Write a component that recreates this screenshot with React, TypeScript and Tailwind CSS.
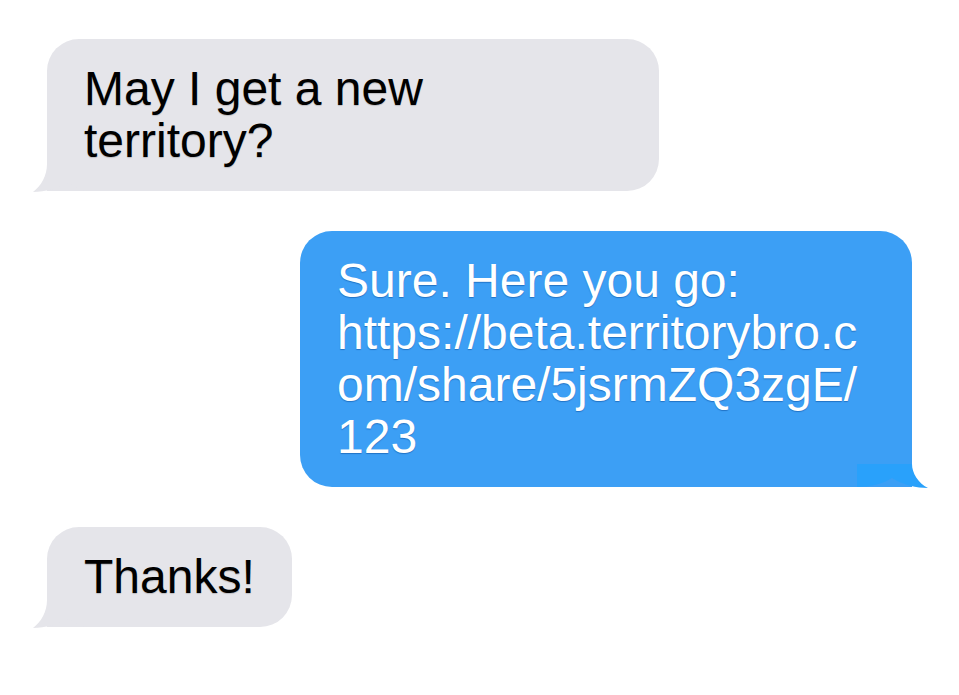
import React from 'react';

type Msg = { text: string; mine: boolean };

const messages: Msg[] = [
  { text: 'May I get a new territory?', mine: false },
  { text: 'Sure. Here you go: https://beta.territorybro.com/share/5jsrmZQ3zgE/123', mine: true },
  { text: 'Thanks!', mine: false },
];

const TailLeft = () => (
  <svg className="absolute -left-[14px] -bottom-[1px]" width="56" height="28" viewBox="0 0 56 28">
    <path d="M14 0 H56 V27 C50 27 43 24 35 19 C25 24 12 28 0 28 C8 22 14 12 14 0 Z" fill="#e5e5ea" />
  </svg>
);

const TailRight = () => (
  <svg className="absolute -right-[16px] -bottom-[1px]" width="71" height="24" viewBox="0 0 71 24">
    <path d="M0 0 H55 C55 9 61 19 71 24 C60 24 46 21 35 14 C26 20 12 23 0 23 Z" fill="#29a1fb" />
  </svg>
);

const Bubble: React.FC<{ msg: Msg }> = ({ msg }) => {
  if (msg.mine) {
    return (
      <div className="relative self-end max-w-[612px] rounded-[32px] rounded-br-none bg-[#3c9ff5] px-[37px] py-6 text-white [overflow-wrap:anywhere] [text-shadow:0_1px_1px_rgba(0,60,140,0.45)]">
        <TailRight />
        <span className="relative">{msg.text}</span>
      </div>
    );
  }
  return (
    <div className="relative self-start max-w-[612px] rounded-[32px] rounded-bl-none bg-[#e5e5ea] px-[37px] py-6 text-black [text-shadow:0_1px_1px_rgba(0,0,0,0.18)]">
      <TailLeft />
      <span className="relative">{msg.text}</span>
    </div>
  );
};

export default function App() {
  return (
    <div
      className="min-h-[695px] w-full bg-white px-[47px] pt-[39px] flex flex-col gap-10 text-[48px] leading-[52px]"
      style={{ fontFamily: '"Liberation Sans", Arial, sans-serif' }}
    >
      {messages.map((m, i) => (
        <Bubble key={i} msg={m} />
      ))}
    </div>
  );
}
